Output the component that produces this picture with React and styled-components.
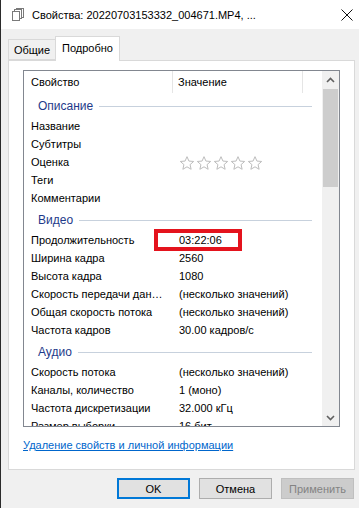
import React from 'react';
import styled, { createGlobalStyle } from 'styled-components';

const GlobalStyle = createGlobalStyle`
    html, body {
        margin: 0;
        padding: 0;
        background: #f0f0f0;
    }
    body {
        font-family: "Liberation Sans", Arial, sans-serif;
        font-size: 11px;
        color: #000;
    }
`;

const Window = styled.div`
    width: 359px;
    height: 508px;
    box-sizing: border-box;
    border-left: 1px solid #2b2b2b;
    display: flex;
    flex-direction: column;
    background: #f0f0f0;
    overflow: hidden;
`;

const TitleBar = styled.div`
    height: 29px;
    flex-shrink: 0;
    background: #fff;
    display: flex;
    align-items: center;
    padding: 0 6px 0 11px;
    font-size: 11px;

    .title {
        margin-left: 8px;
        flex: 1;
        white-space: nowrap;
    }
`;

const Body = styled.div`
    flex: 1;
    display: flex;
    flex-direction: column;
    padding: 7px 4px 0 7px;
`;

const Tabs = styled.div`
    display: flex;
    align-items: flex-end;
    height: 24px;
    position: relative;
    z-index: 1;
`;

const Tab = styled.div`
    box-sizing: border-box;
    width: ${(p) => p.w}px;
    height: ${(p) => (p.active ? '25px' : '21px')};
    margin-bottom: ${(p) => (p.active ? '-1px' : '0')};
    padding-top: ${(p) => (p.active ? '5px' : '4px')};
    text-align: center;
    background: ${(p) => (p.active ? '#fff' : '#f0f0f0')};
    border: 1px solid #d9d9d9;
    border-bottom: ${(p) => (p.active ? 'none' : '1px solid #d9d9d9')};
    border-right: ${(p) => (p.active ? '1px solid #d9d9d9' : 'none')};
    white-space: nowrap;
`;

const Panel = styled.div`
    box-sizing: border-box;
    height: 410px;
    background: #fff;
    border: 1px solid #d9d9d9;
    padding: 9px 14px 0 14px;
    display: flex;
    flex-direction: column;
`;

const ListView = styled.div`
    height: 357px;
    box-sizing: border-box;
    border: 1px solid #828790;
    display: flex;
    flex-shrink: 0;
`;

const Content = styled.div`
    flex: 1;
    overflow: hidden;
    display: flex;
    flex-direction: column;
`;

const Header = styled.div`
    height: 22px;
    flex-shrink: 0;
    display: flex;
    align-items: center;
`;

const HeaderCell = styled.div`
    box-sizing: border-box;
    width: ${(p) => p.w}px;
    height: 100%;
    display: flex;
    align-items: center;
    padding-left: ${(p) => p.pad}px;
    border-right: ${(p) => (p.sep ? '1px solid #e5e5e5' : 'none')};
`;

const GroupRow = styled.div`
    height: 24px;
    flex-shrink: 0;
    display: flex;
    align-items: center;
    padding: 2px 10px 0 14px;
    box-sizing: border-box;
    color: #1e3a8a;
    font-size: 12px;

    &::after {
        content: '';
        flex: 1;
        height: 1px;
        background: #c7d1dd;
        margin-left: 6px;
    }
`;

const Row = styled.div`
    position: relative;
    height: 18px;
    flex-shrink: 0;
    display: flex;
    align-items: center;
`;

const NameCell = styled.div`
    box-sizing: border-box;
    width: 149px;
    padding: 0 6px 0 7px;
    white-space: nowrap;
    overflow: hidden;
    text-overflow: ellipsis;
`;

const ValueCell = styled.div`
    padding-left: 6px;
    white-space: nowrap;
    display: flex;
    align-items: center;
`;

const Highlight = styled.div`
    position: absolute;
    left: 130px;
    top: -2px;
    width: 88px;
    height: 22px;
    box-sizing: border-box;
    border: 4px solid #e4131d;
`;

const Stars = styled.div`
    display: flex;
    gap: 1px;
    margin-top: 1px;
`;

const Scrollbar = styled.div`
    width: 17px;
    flex-shrink: 0;
    background: #f0f0f0;
    display: flex;
    flex-direction: column;
`;

const ScrollArrow = styled.div`
    height: 17px;
    display: flex;
    align-items: center;
    justify-content: center;
`;

const Track = styled.div`
    flex: 1;
    padding: 1px 1px 0 1px;
`;

const Thumb = styled.div`
    height: 98px;
    background: #cdcdcd;
`;

const Link = styled.a`
    margin-top: 11px;
    color: #0066cc;
    text-decoration: underline;
    align-self: flex-start;
    line-height: 15px;
`;

const Buttons = styled.div`
    display: flex;
    justify-content: flex-end;
    gap: 9px;
    margin-top: 8px;
    padding-right: 1px;
`;

const Button = styled.div`
    box-sizing: border-box;
    width: 73px;
    height: 21px;
    display: flex;
    align-items: center;
    justify-content: center;
    background: ${(p) => (p.disabled ? '#cccccc' : '#e1e1e1')};
    color: ${(p) => (p.disabled ? '#838383' : '#000')};
    border: ${(p) =>
        p.primary ? '2px solid #0078d7' : p.disabled ? '1px solid #bfbfbf' : '1px solid #adadad'};
`;

const Star = () => (
    <svg width="16" height="16" viewBox="0 0 24 24">
        <path
            d="M12 2.5l2.9 6.6 7.1.6-5.4 4.7 1.6 7-6.2-3.7-6.2 3.7 1.6-7L2 9.7l7.1-.6z"
            fill="none"
            stroke="#bdbdbd"
            strokeWidth="1.5"
            strokeLinejoin="round"
        />
    </svg>
);

const PagesIcon = () => (
    <svg width="12" height="13" viewBox="0 0 12 13">
        <rect x="4.5" y="0.5" width="7" height="9" fill="#fff" stroke="#7a7a7a" />
        <rect x="2.5" y="1.5" width="7" height="9" fill="#fff" stroke="#7a7a7a" />
        <rect x="0.5" y="3.5" width="7" height="9" fill="#fff" stroke="#7a7a7a" />
    </svg>
);

const CloseIcon = () => (
    <svg width="12" height="12" viewBox="0 0 12 12">
        <path d="M0.5 0.5l11 11M11.5 0.5l-11 11" stroke="#111" strokeWidth="1" />
    </svg>
);

const Chevron = ({ down }) => (
    <svg width="9" height="6" viewBox="0 0 9 6">
        <path
            d={down ? 'M1 1l3.5 3.5L8 1' : 'M1 5l3.5-3.5L8 5'}
            fill="none"
            stroke="#606060"
            strokeWidth="1.6"
        />
    </svg>
);

const groups = [
    {
        title: 'Описание',
        rows: [['Название'], ['Субтитры'], ['Оценка', 'stars'], ['Теги'], ['Комментарии']],
    },
    {
        title: 'Видео',
        rows: [
            ['Продолжительность', '03:22:06', true],
            ['Ширина кадра', '2560'],
            ['Высота кадра', '1080'],
            ['Скорость передачи данных', '(несколько значений)'],
            ['Общая скорость потока', '(несколько значений)'],
            ['Частота кадров', '30.00 кадров/с'],
        ],
    },
    {
        title: 'Аудио',
        rows: [
            ['Скорость потока', '(несколько значений)'],
            ['Каналы, количество', '1 (моно)'],
            ['Частота дискретизации', '32.000 кГц'],
            ['Размер выборки', '16 бит'],
        ],
    },
];

const App = () => {
    return (
        <Window>
            <GlobalStyle />
            <TitleBar>
                <PagesIcon />
                <span className="title">Свойства: 20220703153332_004671.MP4, ...</span>
                <CloseIcon />
            </TitleBar>

            <Body>
                <Tabs>
                    <Tab w={47}>Общие</Tab>
                    <Tab w={65} active>
                        Подробно
                    </Tab>
                </Tabs>

                <Panel>
                    <ListView>
                        <Content>
                            <Header>
                                <HeaderCell w={149} pad={7} sep>
                                    Свойство
                                </HeaderCell>
                                <HeaderCell w={130} pad={5} sep>
                                    Значение
                                </HeaderCell>
                            </Header>

                            {groups.map((g) => (
                                <React.Fragment key={g.title}>
                                    <GroupRow>{g.title}</GroupRow>
                                    {g.rows.map(([name, value, marked]) => (
                                        <Row key={name}>
                                            <NameCell>{name}</NameCell>
                                            <ValueCell>
                                                {value === 'stars' ? (
                                                    <Stars>
                                                        {[0, 1, 2, 3, 4].map((i) => (
                                                            <Star key={i} />
                                                        ))}
                                                    </Stars>
                                                ) : (
                                                    value
                                                )}
                                            </ValueCell>
                                            {marked && <Highlight />}
                                        </Row>
                                    ))}
                                </React.Fragment>
                            ))}
                        </Content>

                        <Scrollbar>
                            <ScrollArrow>
                                <Chevron />
                            </ScrollArrow>
                            <Track>
                                <Thumb />
                            </Track>
                            <ScrollArrow>
                                <Chevron down />
                            </ScrollArrow>
                        </Scrollbar>
                    </ListView>

                    <Link>Удаление свойств и личной информации</Link>
                </Panel>

                <Buttons>
                    <Button primary>OK</Button>
                    <Button>Отмена</Button>
                    <Button disabled>Применить</Button>
                </Buttons>
            </Body>
        </Window>
    );
};

export default App;
